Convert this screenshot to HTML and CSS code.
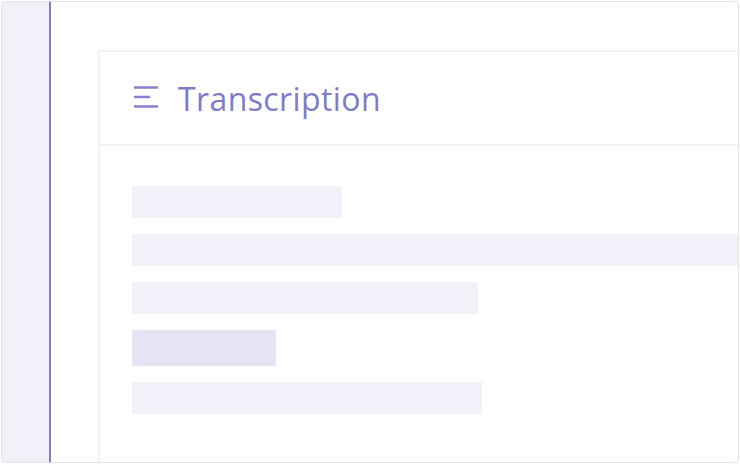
FILE: index.html
```html
<!DOCTYPE html>
<html lang="en">
<head>
<meta charset="utf-8">
<title>Transcription</title>
<link rel="stylesheet" href="styles.css">
</head>
<body>
<div class="frame">
  <aside class="sidebar"></aside>
  <main class="main">
    <section class="card">
      <header class="card-header">
        <svg class="menu-icon" width="26" height="24" viewBox="0 0 26 24" aria-hidden="true">
          <path d="M1 2.5H25M1 12H17M1 21.5H25" stroke="#8481d0" stroke-width="2.4" fill="none"/>
        </svg>
        <h1 class="title">Transcription</h1>
      </header>
      <div class="card-body">
        <div class="bar bar-a"></div>
        <div class="bar bar-b"></div>
        <div class="bar bar-c"></div>
        <div class="bar bar-d"></div>
        <div class="bar bar-e"></div>
      </div>
    </section>
  </main>
</div>
</body>
</html>
```
FILE: styles.css
```css
* { box-sizing: border-box; }
html, body { margin: 0; padding: 0; background: #ffffff; }
body { width: 740px; height: 464px; overflow: hidden; font-family: "Open Sans", Lato, sans-serif; }

.frame {
  margin: 1px;
  width: 738px;
  height: 462px;
  border: 1px solid #e3e2f3;
  border-radius: 4px;
  display: flex;
  overflow: hidden;
  background: #ffffff;
}

.sidebar {
  flex: 0 0 49px;
  background: #f1f1fa;
  border-right: 2px solid #7f7dcb;
}

.main {
  flex: 1;
  min-width: 0;
  padding: 48px 0 0 47px;
  overflow: hidden;
}

.card {
  width: 720px;
  height: 460px;
  border: 2px solid #f0f0f8;
}

.card-header {
  height: 94px;
  border-bottom: 2px solid #f0f0f8;
  display: flex;
  align-items: center;
  padding-left: 33px;
  gap: 19px;
}

.menu-icon { display: block; margin-top: -2px; }

.title {
  margin: 2px 0 0;
  font-family: "Open Sans", Lato, sans-serif;
  font-weight: 400;
  font-size: 32px;
  letter-spacing: 0.4px;
  color: #7e7bcb;
  line-height: 1;
}

.card-body {
  padding: 40px 0 0 32px;
  display: flex;
  flex-direction: column;
  gap: 16px;
}

.bar { height: 32px; background: #f1f1fa; }
.bar-a { width: 210px; }
.bar-b { width: 660px; }
.bar-c { width: 346px; }
.bar-d { width: 144px; height: 36px; background: #e5e4f4; }
.bar-e { width: 350px; }
```
